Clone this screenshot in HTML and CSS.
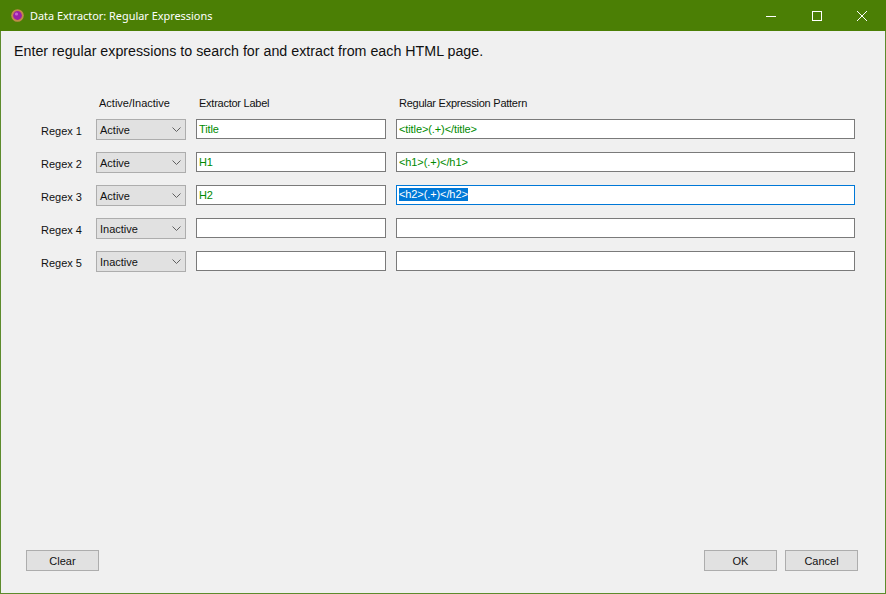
FILE: index.html
```html
<!DOCTYPE html>
<html lang="en">

<head>
    <meta charset="UTF-8">
    <title>Data Extractor: Regular Expressions</title>
    <link rel="stylesheet" href="styles.css">
</head>

<body>
    <div class="window">
        <div class="titlebar">
            <svg class="app-icon" width="13" height="13" viewBox="0 0 13 13">
                <circle cx="6.5" cy="6.5" r="6.3" fill="#c08a4a"/>
                <circle cx="6.5" cy="6.5" r="4.4" fill="#9c1fa8"/>
                <circle cx="5.5" cy="5" r="1.6" fill="#c766cf"/>
            </svg>
            <span class="title">Data Extractor: Regular Expressions</span>
            <div class="controls">
                <div class="control">
                    <svg width="10" height="10" viewBox="0 0 10 10"><path d="M0 5.5H10" stroke="#fff" fill="none"/></svg>
                </div>
                <div class="control">
                    <svg width="10" height="10" viewBox="0 0 10 10"><rect x="0.5" y="0.5" width="9" height="9" stroke="#fff" fill="none"/></svg>
                </div>
                <div class="control">
                    <svg width="10" height="10" viewBox="0 0 10 10"><path d="M0 0L10 10M10 0L0 10" stroke="#fff" fill="none"/></svg>
                </div>
            </div>
        </div>

        <div class="content">
            <p class="intro">Enter regular expressions to search for and extract from each HTML page.</p>

            <div class="regex-grid">
                <div></div>
                <div class="head">Active/Inactive</div>
                <div class="head tight">Extractor Label</div>
                <div class="head tight">Regular Expression Pattern</div>

                <div class="row-label">Regex 1</div>
                <div class="select">Active<svg class="chevron" width="9" height="5" viewBox="0 0 9 5"><path d="M0.5 0.5L4.5 4.5L8.5 0.5" stroke="#606060" fill="none"/></svg></div>
                <div class="field">Title</div>
                <div class="field">&lt;title&gt;(.+)&lt;/title&gt;</div>

                <div class="row-label">Regex 2</div>
                <div class="select">Active<svg class="chevron" width="9" height="5" viewBox="0 0 9 5"><path d="M0.5 0.5L4.5 4.5L8.5 0.5" stroke="#606060" fill="none"/></svg></div>
                <div class="field">H1</div>
                <div class="field">&lt;h1&gt;(.+)&lt;/h1&gt;</div>

                <div class="row-label">Regex 3</div>
                <div class="select">Active<svg class="chevron" width="9" height="5" viewBox="0 0 9 5"><path d="M0.5 0.5L4.5 4.5L8.5 0.5" stroke="#606060" fill="none"/></svg></div>
                <div class="field">H2</div>
                <div class="field focused"><span class="selected">&lt;h2&gt;(.+)&lt;/h2&gt;</span></div>

                <div class="row-label">Regex 4</div>
                <div class="select">Inactive<svg class="chevron" width="9" height="5" viewBox="0 0 9 5"><path d="M0.5 0.5L4.5 4.5L8.5 0.5" stroke="#606060" fill="none"/></svg></div>
                <div class="field"></div>
                <div class="field"></div>

                <div class="row-label">Regex 5</div>
                <div class="select">Inactive<svg class="chevron" width="9" height="5" viewBox="0 0 9 5"><path d="M0.5 0.5L4.5 4.5L8.5 0.5" stroke="#606060" fill="none"/></svg></div>
                <div class="field"></div>
                <div class="field"></div>
            </div>

            <div class="buttons">
                <button type="button">Clear</button>
                <div class="buttons-right">
                    <button type="button">OK</button>
                    <button type="button">Cancel</button>
                </div>
            </div>
        </div>
    </div>
</body>

</html>
```
FILE: styles.css
```css
* {
    box-sizing: border-box;
}

body {
    margin: 0;
    font-family: "Liberation Sans", Arial, sans-serif;
    font-size: 11px;
    color: #111;
    background-color: #f0f0f0;
}

.window {
    width: 886px;
    height: 594px;
    display: flex;
    flex-direction: column;
    border: 1px solid #5d8b2c;
    border-top: none;
}

.titlebar {
    height: 31px;
    margin: 0 -1px;
    flex: none;
    display: flex;
    align-items: center;
    padding-left: 11px;
    background-color: #4b7f05;
    color: #fff;
}

.app-icon {
    margin-right: 6px;
    margin-bottom: 1px;
}

.title {
    font-family: "Noto Sans", sans-serif;
    font-size: 10.9px;
}

.controls {
    margin-left: auto;
    margin-right: 1px;
    display: flex;
}

.control {
    width: 45.5px;
    height: 30px;
    display: flex;
    align-items: center;
    justify-content: center;
}

.content {
    flex: 1;
    display: flex;
    flex-direction: column;
    padding: 12px 27px 22px 13px;
}

.intro {
    margin: 0;
    font-size: 14.25px;
    line-height: 16px;
}

.regex-grid {
    margin-top: 38px;
    display: grid;
    grid-template-columns: 72px 90px 190px 459px;
    grid-template-rows: 10px repeat(5, 21px);
    column-gap: 10px;
    row-gap: 12px;
    align-items: start;
}

.head {
    line-height: 13px;
    padding-left: 3px;
}

.head.tight {
    letter-spacing: -0.25px;
}

.row-label {
    text-align: right;
    line-height: 13px;
    padding-top: 6px;
    padding-right: 4px;
}

.select {
    height: 21px;
    display: flex;
    align-items: center;
    justify-content: space-between;
    padding: 0 4px 0 3px;
    background-color: #e1e1e1;
    border: 1px solid #adadad;
}

.field {
    height: 20px;
    line-height: 18px;
    padding-left: 2px;
    letter-spacing: -0.1px;
    white-space: nowrap;
    background-color: #fff;
    border: 1px solid #7a7a7a;
    color: #008a00;
}

.field.focused {
    border-color: #0078d7;
}

.selected {
    display: inline-block;
    vertical-align: top;
    height: 13px;
    margin-top: 2px;
    line-height: 13px;
    background-color: #0078d7;
    color: #fff;
}

.buttons {
    margin-top: auto;
    display: flex;
    justify-content: space-between;
    padding-left: 12px;
}

.buttons-right {
    display: flex;
    gap: 8px;
}

button {
    width: 73px;
    height: 21px;
    padding: 0;
    font-family: inherit;
    font-size: 11px;
    color: #111;
    background-color: #e1e1e1;
    border: 1px solid #adadad;
}
```
